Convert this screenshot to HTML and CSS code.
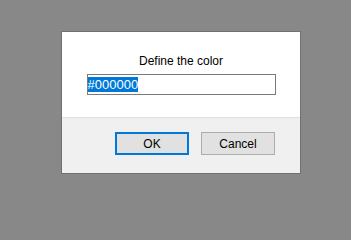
FILE: index.html
```html
<!DOCTYPE html>
<html>
<head>
<meta charset="utf-8">
<link rel="stylesheet" href="styles.css">
</head>
<body>
<div class="dialog">
  <div class="content">
    <div class="label">Define the color</div>
    <div class="field"><span class="sel">#000000</span></div>
  </div>
  <div class="footer">
    <div class="btn btn-default">OK</div>
    <div class="btn">Cancel</div>
  </div>
</div>
</body>
</html>
```
FILE: styles.css
```css
html, body {
  margin: 0;
}
body {
  background: #888888;
  padding: 31px 0 32px 61px;
  font-family: "Liberation Sans", Arial, sans-serif;
  color: #000;
}
.dialog {
  width: 240px;
  height: 143px;
  box-sizing: border-box;
  border: 1px solid #707070;
  background: #f0f0f0;
  display: flex;
  flex-direction: column;
}
.content {
  background: #fff;
  height: 86px;
  border-bottom: 1px solid #dfdfdf;
  display: flex;
  flex-direction: column;
  align-items: center;
  padding-top: 22px;
  box-sizing: border-box;
}
.label {
  font-size: 12px;
  line-height: 15px;
  height: 15px;
}
.field {
  margin-top: 5px;
  width: 189px;
  height: 21px;
  box-sizing: border-box;
  border: 1px solid #7a7a7a;
  background: #fff;
  display: flex;
  align-items: center;
  padding-left: 0;
  font-size: 13px;
}
.sel {
  background: #0078d7;
  color: #fff;
  line-height: 15px;
}
.footer {
  flex: 1;
  display: flex;
  justify-content: flex-end;
  align-items: flex-start;
  gap: 12px;
  padding: 14px 25px 0 0;
}
.btn {
  width: 74px;
  height: 23px;
  box-sizing: border-box;
  border: 1px solid #adadad;
  background: #e1e1e1;
  font-size: 12px;
  display: flex;
  align-items: center;
  justify-content: center;
}
.btn-default {
  border: 2px solid #0078d7;
}
```
